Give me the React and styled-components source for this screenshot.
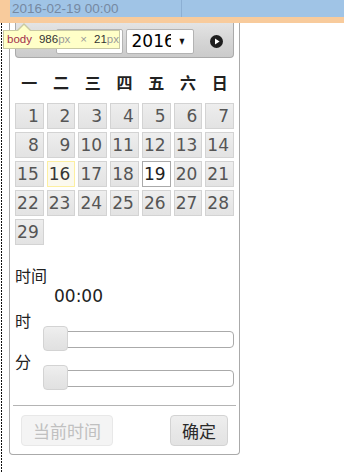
import React from 'react';
import styled, { createGlobalStyle, css } from 'styled-components';

const Global = createGlobalStyle`
  *, *::before, *::after { box-sizing: border-box; }
  html, body { margin: 0; padding: 0; background: #fff; }
  body {
    width: 344px; height: 473px; overflow: hidden;
    font-family: "DejaVu Sans", "Noto Sans CJK SC", sans-serif;
  }
`;

const Page = styled.div`
  position: relative;
  width: 344px;
  height: 473px;
  display: flex;
  flex-direction: column;
`;

const InputStrip = styled.div`
  height: 17px;
  flex-shrink: 0;
  display: flex;
  background: #f8cb9c;
`;

const InputField = styled.div`
  margin-left: 10px;
  flex: 1;
  display: flex;
  background: #a0c4e6;
`;

const InputText = styled.div`
  width: 172px;
  padding-left: 2px;
  border-right: 1px solid #8cafd3;
  font: 13.5px/17px "Liberation Sans", Arial, sans-serif;
  color: #7689a2;
  white-space: nowrap;
  overflow: hidden;
`;

const MarginBand = styled.div`
  height: 6px;
  flex-shrink: 0;
  background: #f8cb9c;
`;

const BodyArea = styled.div`
  flex: 1;
  padding-left: 9px;
  background-image: repeating-linear-gradient(to bottom, #111 0 2px, transparent 2px 3px);
  background-size: 1px 100%;
  background-position: 1px 0;
  background-repeat: no-repeat;
`;

const Picker = styled.div`
  width: 231px;
  background: #fff;
  border: 1px solid #aaa;
  border-top: none;
  border-radius: 0 0 4px 4px;
  padding: 0 5px 8px 5px;
  display: flex;
  flex-direction: column;
`;

const Header = styled.div`
  height: 35px;
  padding-top: 6px;
  border: 1px solid #aaa;
  border-top: none;
  border-radius: 0 0 4px 4px;
  background: linear-gradient(to bottom, #e4e4e4 0%, #d6d6d6 50%, #cbcbcb 100%);
  display: flex;
  align-items: flex-start;
`;

const NavButton = styled.div`
  width: 30px;
  height: 25px;
  flex-shrink: 0;
  display: flex;
  align-items: center;
  justify-content: center;
  ${(p) => (p.$side === 'right' ? 'margin-right: 2px;' : 'margin-left: 2px;')}
`;

const Selects = styled.div`
  flex: 1;
  display: flex;
  justify-content: center;
  gap: 3px;
`;

const FakeSelect = styled.div`
  width: ${(p) => p.$w}px;
  height: 25px;
  border: 1px solid #b3b3b3;
  border-radius: 2px;
  background: #fff;
  display: flex;
  align-items: center;
  padding-left: 5px;
`;

const SelectText = styled.span`
  width: ${(p) => p.$w}px;
  overflow: hidden;
  white-space: nowrap;
  font: 17px/23px "DejaVu Sans", "Noto Sans CJK SC", sans-serif;
  color: #000;
`;

const SelectArrow = styled.span`
  margin-left: 8px;
  font: 8px/8px "DejaVu Sans", sans-serif;
  color: #111;
  transform: scaleX(0.8);
`;

const WeekRow = styled.div`
  display: grid;
  grid-template-columns: repeat(7, 1fr);
  column-gap: 3px;
  padding: 14px 0 11px;
`;

const WeekDay = styled.div`
  text-align: center;
  font: bold 16px/20px "Noto Sans CJK SC", sans-serif;
  color: #222;
`;

const DayGrid = styled.div`
  display: grid;
  grid-template-columns: repeat(7, 1fr);
  grid-auto-rows: 26px;
  column-gap: 3px;
  row-gap: 3px;
`;

const cellStates = {
  default: css`
    background: linear-gradient(to bottom, #eeeeee 0%, #e8e8e8 50%, #e3e3e3 100%);
    border-color: #d3d3d3;
    color: #555;
  `,
  today: css`
    background: #fbf9ee;
    border-color: #fcefa1;
    color: #363636;
  `,
  active: css`
    background: #fff;
    border-color: #aaa;
    color: #212121;
  `,
};

const DayCell = styled.div`
  border: 1px solid;
  padding-right: 4px;
  text-align: right;
  font: 17px/24px "DejaVu Sans", sans-serif;
  ${(p) => cellStates[p.$state || 'default']}
`;

const Label = styled.div`
  margin-top: ${(p) => p.$mt || 0}px;
  font: 16px/18px "Noto Sans CJK SC", sans-serif;
  color: #222;
`;

const TimeValue = styled.div`
  margin: 2px 0 0 39px;
  font: 17px/20px "DejaVu Sans", sans-serif;
  color: #222;
`;

const SliderTrack = styled.div`
  position: relative;
  margin: ${(p) => p.$mt || 0}px 0 0 29px;
  height: 17px;
  border: 1px solid #aaa;
  border-radius: 4px;
  background: #fff;
`;

const SliderHandle = styled.div`
  position: absolute;
  left: -2px;
  top: -6px;
  width: 25px;
  height: 25px;
  border: 1px solid #d3d3d3;
  border-radius: 4px;
  background: linear-gradient(to bottom, #efefef 0%, #e7e7e7 50%, #e1e1e1 100%);
`;

const Divider = styled.div`
  margin: 18px -2px 0 -2px;
  height: 1px;
  background: #b4b4b4;
`;

const ButtonRow = styled.div`
  margin-top: 9px;
  padding: 0 6px;
  display: flex;
  justify-content: space-between;
`;

const Button = styled.div`
  height: 31px;
  padding: 0 11px;
  border: 1px solid;
  border-radius: 4px;
  display: flex;
  align-items: center;
  font: 17px/20px "Noto Sans CJK SC", sans-serif;
  ${(p) =>
    p.$disabled
      ? css`
          background: #f4f4f4;
          border-color: #e8e8e8;
          color: #c0c0c0;
        `
      : css`
          background: linear-gradient(to bottom, #eeeeee 0%, #e8e8e8 50%, #e3e3e3 100%);
          border-color: #d3d3d3;
          color: #2a2a2a;
        `}
`;

const Tooltip = styled.div`
  position: absolute;
  left: 3px;
  top: 30px;
  width: 117px;
  height: 19px;
  padding-left: 3px;
  background: #ffffc8;
  border: 1px solid #c9c9a3;
  font: 11.5px/17px "Liberation Sans", Arial, sans-serif;
  white-space: nowrap;
  color: #333;

  &::before, &::after {
    content: "";
    position: absolute;
    width: 0;
    height: 0;
    border-style: solid;
  }
  &::before {
    left: 13px;
    top: -8px;
    border-width: 0 7px 7px 7px;
    border-color: transparent transparent #c9c9a3 transparent;
  }
  &::after {
    left: 14px;
    top: -6px;
    border-width: 0 6px 6px 6px;
    border-color: transparent transparent #ffffc8 transparent;
  }
`;

const TipTag = styled.span`
  color: #a3304c;
  margin-right: 7px;
`;
const TipNum = styled.span`color: #333;`;
const TipUnit = styled.span`color: #999;`;
const TipTimes = styled.span`
  color: #999;
  margin: 0 7px 0 10px;
`;

const CircleIcon = ({ dir }) => (
  <svg width="13" height="13" viewBox="0 0 13 13">
    <circle cx="6.5" cy="6.5" r="6.5" fill="#1e1e1e" />
    {dir === 'right' ? (
      <polygon points="5,3.6 9.6,6.5 5,9.4" fill="#fff" />
    ) : (
      <polygon points="8,3.6 3.4,6.5 8,9.4" fill="#fff" />
    )}
  </svg>
);

const weekdays = ['一', '二', '三', '四', '五', '六', '日'];
const days = Array.from({ length: 29 }, (_, i) => i + 1);

export default function App() {
  return (
    <>
      <Global />
      <Page>
        <InputStrip>
          <InputField>
            <InputText>2016-02-19 00:00</InputText>
          </InputField>
        </InputStrip>
        <MarginBand />
        <BodyArea>
          <Picker>
            <Header>
              <NavButton $side="left">
                <CircleIcon dir="left" />
              </NavButton>
              <Selects>
                <FakeSelect $w={67}>
                  <SelectText $w={39}>二月</SelectText>
                  <SelectArrow>▼</SelectArrow>
                </FakeSelect>
                <FakeSelect $w={68}>
                  <SelectText $w={39}>2016</SelectText>
                  <SelectArrow>▼</SelectArrow>
                </FakeSelect>
              </Selects>
              <NavButton $side="right">
                <CircleIcon dir="right" />
              </NavButton>
            </Header>
            <WeekRow>
              {weekdays.map((w) => (
                <WeekDay key={w}>{w}</WeekDay>
              ))}
            </WeekRow>
            <DayGrid>
              {days.map((d) => (
                <DayCell key={d} $state={d === 16 ? 'today' : d === 19 ? 'active' : 'default'}>
                  {d}
                </DayCell>
              ))}
            </DayGrid>
            <Label $mt={21}>时间</Label>
            <TimeValue>00:00</TimeValue>
            <Label $mt={5}>时</Label>
            <SliderTrack $mt={2}>
              <SliderHandle />
            </SliderTrack>
            <Label $mt={4}>分</Label>
            <SliderTrack>
              <SliderHandle />
            </SliderTrack>
            <Divider />
            <ButtonRow>
              <Button $disabled>当前时间</Button>
              <Button>确定</Button>
            </ButtonRow>
          </Picker>
        </BodyArea>
        <Tooltip>
          <TipTag>body</TipTag>
          <TipNum>986</TipNum>
          <TipUnit>px</TipUnit>
          <TipTimes>×</TipTimes>
          <TipNum>21</TipNum>
          <TipUnit>px</TipUnit>
        </Tooltip>
      </Page>
    </>
  );
}
